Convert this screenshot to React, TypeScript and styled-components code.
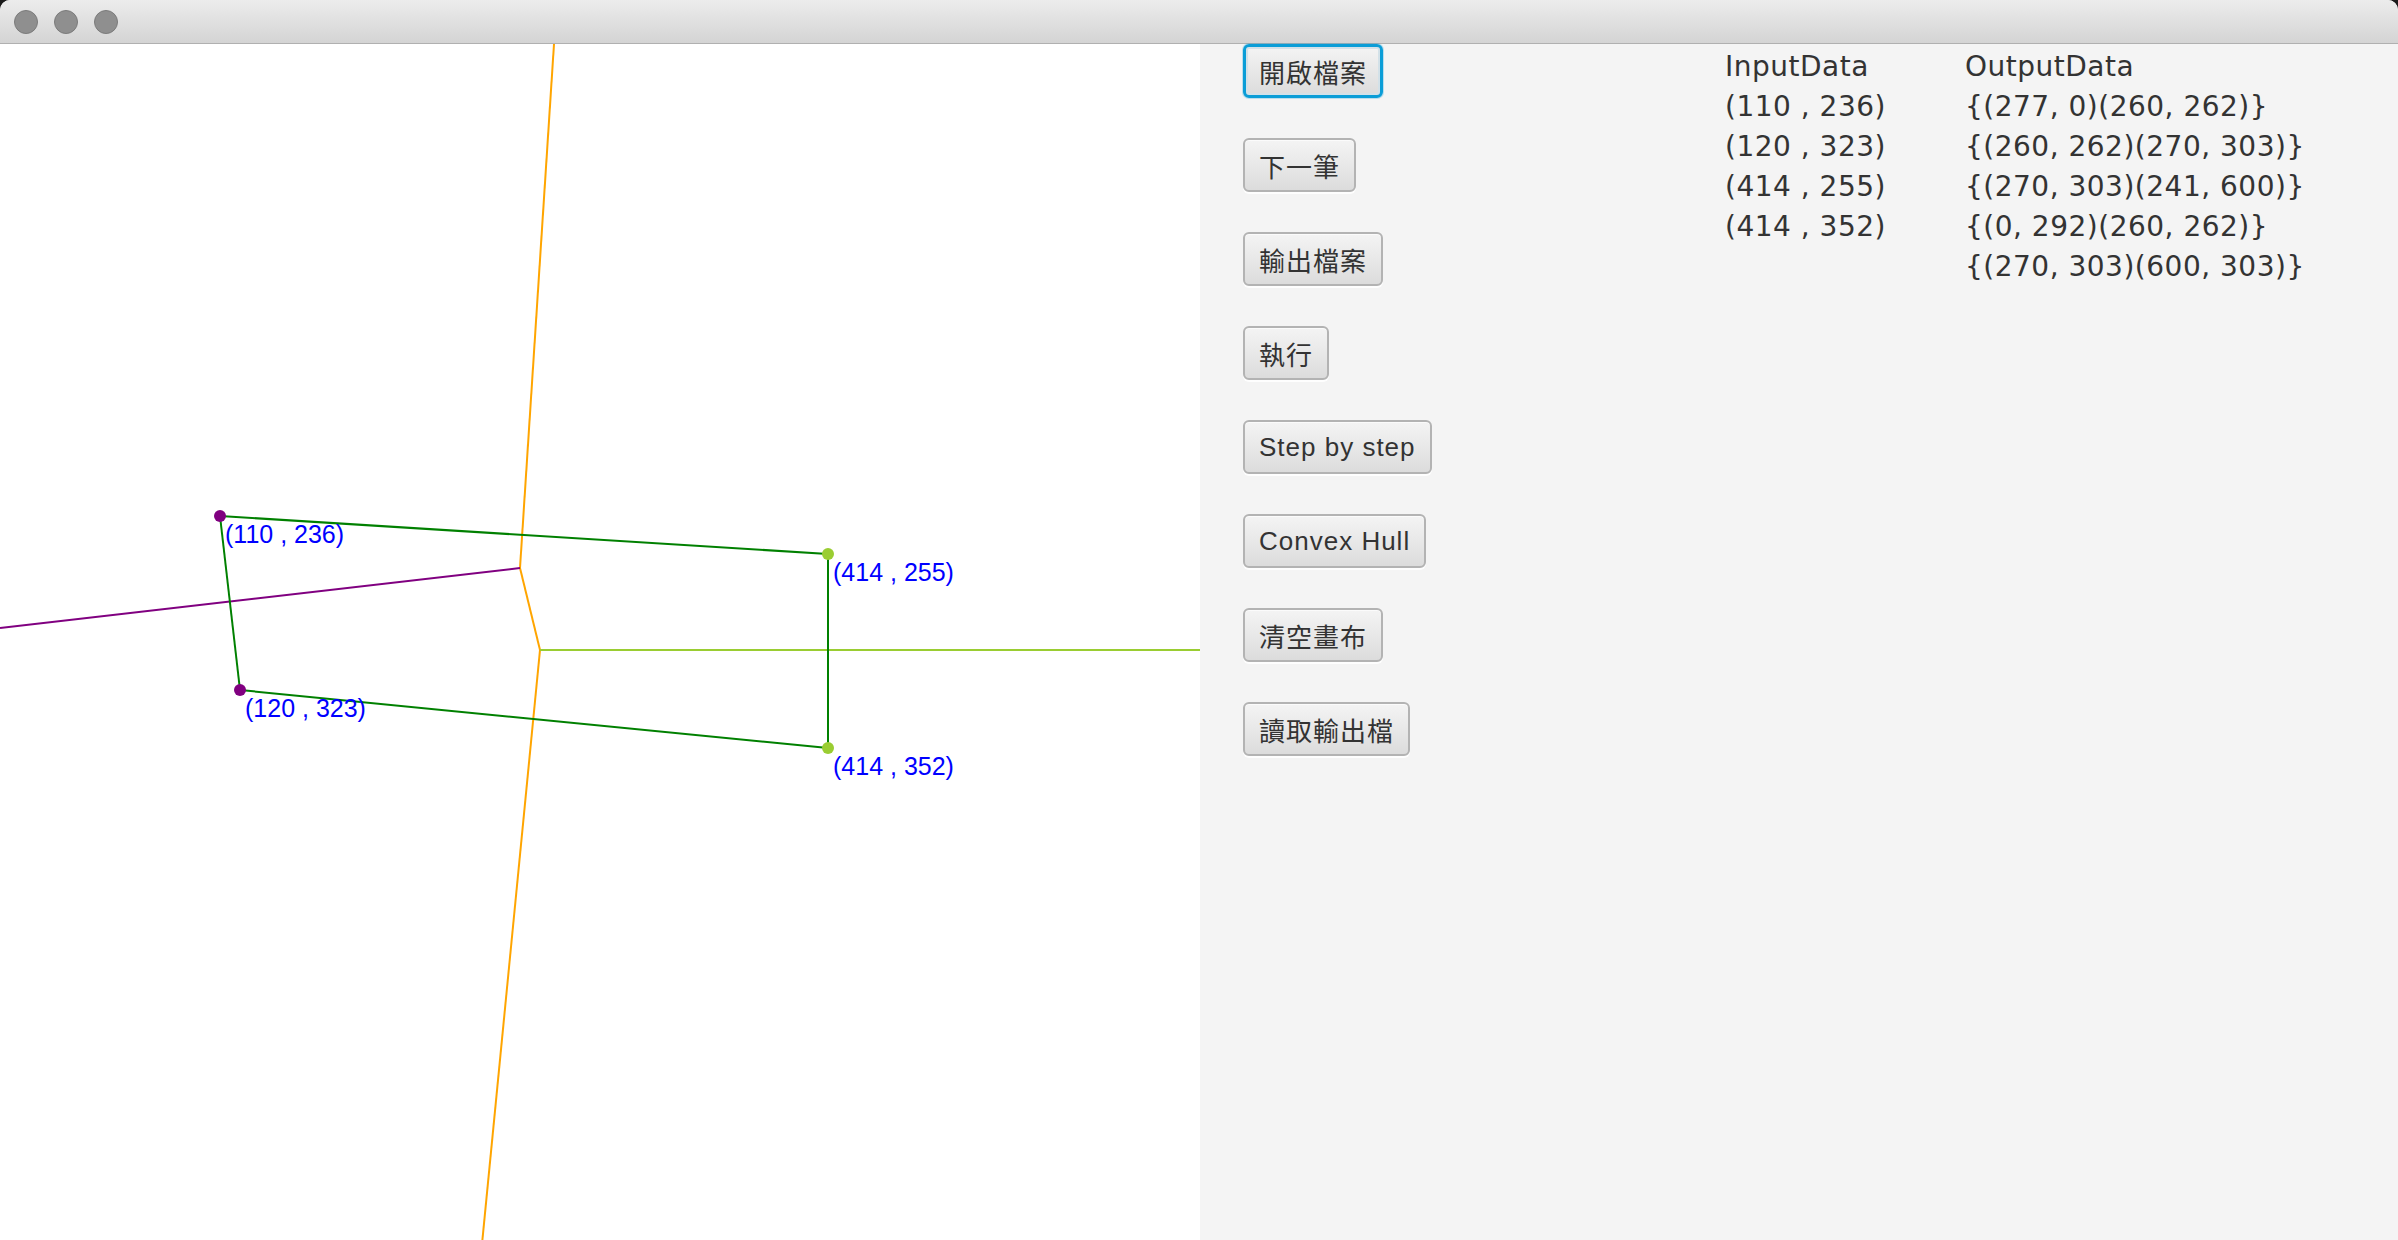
import React from "react";
import styled, { createGlobalStyle, css } from "styled-components";

const points = [
  { x: 110, y: 236, color: "#800080" },
  { x: 120, y: 323, color: "#800080" },
  { x: 414, y: 255, color: "#9acd32" },
  { x: 414, y: 352, color: "#9acd32" },
];

const voronoi = [
  { x1: 277, y1: 0, x2: 260, y2: 262, color: "#ffa500" },
  { x1: 260, y1: 262, x2: 270, y2: 303, color: "#ffa500" },
  { x1: 270, y1: 303, x2: 241, y2: 600, color: "#ffa500" },
  { x1: 0, y1: 292, x2: 260, y2: 262, color: "#800080" },
  { x1: 270, y1: 303, x2: 600, y2: 303, color: "#9acd32" },
];

const hull = [
  [110, 236, 414, 255],
  [414, 255, 414, 352],
  [414, 352, 120, 323],
  [120, 323, 110, 236],
];

const buttons = [
  "開啟檔案",
  "下一筆",
  "輸出檔案",
  "執行",
  "Step by step",
  "Convex Hull",
  "清空畫布",
  "讀取輸出檔",
];

const outputData = [
  "{(277, 0)(260, 262)}",
  "{(260, 262)(270, 303)}",
  "{(270, 303)(241, 600)}",
  "{(0, 292)(260, 262)}",
  "{(270, 303)(600, 303)}",
];

export default function App() {
  return (
    <>
      <GlobalStyle />
      <Window>
        <TitleBar>
          <TrafficLight />
          <TrafficLight />
          <TrafficLight />
        </TitleBar>
        <Content>
          <CanvasPane>
            <svg width={1200} height={1200} viewBox="0 0 600 600">
              {voronoi.map((l, i) => (
                <line
                  key={i}
                  x1={l.x1}
                  y1={l.y1}
                  x2={l.x2}
                  y2={l.y2}
                  stroke={l.color}
                  strokeWidth={1}
                />
              ))}
              {hull.map(([x1, y1, x2, y2], i) => (
                <line
                  key={i}
                  x1={x1}
                  y1={y1}
                  x2={x2}
                  y2={y2}
                  stroke="#008000"
                  strokeWidth={1}
                />
              ))}
              {points.map((p, i) => (
                <g key={i}>
                  <circle cx={p.x} cy={p.y} r={3} fill={p.color} />
                  <text
                    x={p.x + 2.5}
                    y={p.y + 13.5}
                    fill="#0000ff"
                    fontSize={12.5}
                    fontFamily="'Liberation Sans', Arial, sans-serif"
                  >
                    ({p.x} , {p.y})
                  </text>
                </g>
              ))}
            </svg>
          </CanvasPane>
          <Panel>
            <ButtonColumn>
              {buttons.map((label, i) => (
                <FxButton key={label} $focused={i === 0}>
                  {label}
                </FxButton>
              ))}
            </ButtonColumn>
            <DataColumn $width={240}>
              <DataLine>InputData</DataLine>
              {points.map((p) => (
                <DataLine key={p.x + "-" + p.y}>
                  ({p.x} , {p.y})
                </DataLine>
              ))}
            </DataColumn>
            <DataColumn>
              <DataLine>OutputData</DataLine>
              {outputData.map((line) => (
                <DataLine key={line}>{line}</DataLine>
              ))}
            </DataColumn>
          </Panel>
        </Content>
      </Window>
    </>
  );
}

const GlobalStyle = createGlobalStyle`
  html, body {
    margin: 0;
    padding: 0;
    height: 100%;
    overflow: hidden;
    background: #1b1b1b;
  }
  * {
    box-sizing: border-box;
  }
`;

const Window = styled.div`
  width: 2398px;
  height: 1240px;
  display: flex;
  flex-direction: column;
  border-radius: 10px 10px 0 0;
  overflow: hidden;
  background: #f4f4f4;
`;

const TitleBar = styled.div`
  height: 44px;
  flex-shrink: 0;
  display: flex;
  align-items: center;
  gap: 16px;
  padding: 1px 0 0 14px;
  background: linear-gradient(to bottom, #ececec, #d4d4d4);
  border-bottom: 1px solid #b0b0b0;
`;

const TrafficLight = styled.span`
  width: 24px;
  height: 24px;
  border-radius: 50%;
  background: #8f8f8f;
  border: 1px solid #7b7b7b;
`;

const Content = styled.div`
  flex: 1;
  display: flex;
  min-height: 0;
`;

const CanvasPane = styled.div`
  width: 1200px;
  flex-shrink: 0;
  background: #ffffff;
  overflow: hidden;

  svg {
    display: block;
  }
`;

const Panel = styled.div`
  flex: 1;
  display: flex;
  background: #f4f4f4;
`;

const ButtonColumn = styled.div`
  width: 525px;
  padding-left: 43px;
  display: flex;
  flex-direction: column;
  align-items: flex-start;
  gap: 40px;
`;

const FxButton = styled.button<{ $focused?: boolean }>`
  height: 54px;
  padding: 0 14px;
  display: flex;
  align-items: center;
  font-family: "Liberation Sans", "Noto Sans CJK TC", sans-serif;
  font-size: 26px;
  letter-spacing: 1px;
  color: #333333;
  white-space: nowrap;
  border: 2px solid #b3b3b3;
  border-radius: 6px;
  background: linear-gradient(to bottom, #f4f4f4, #dcdcdc);
  box-shadow: inset 0 1px 0 #fbfbfb, 0 2px 0 rgba(255, 255, 255, 0.9);
  cursor: pointer;

  ${(p) =>
    p.$focused &&
    css`
      border: 3px solid #0a9dd7;
      padding: 0 13px;
      box-shadow: 0 0 0 1px rgba(10, 157, 215, 0.25),
        inset 0 0 0 2px #d3e1e8;
    `}
`;

const DataColumn = styled.div<{ $width?: number }>`
  ${(p) => (p.$width ? `width: ${p.$width}px;` : "flex: 1;")}
  padding-top: 3px;
  display: flex;
  flex-direction: column;
`;

const DataLine = styled.div`
  font-family: "DejaVu Sans", "Liberation Sans", sans-serif;
  font-size: 28px;
  line-height: 40px;
  letter-spacing: 0.5px;
  color: #333333;
  white-space: nowrap;
`;
